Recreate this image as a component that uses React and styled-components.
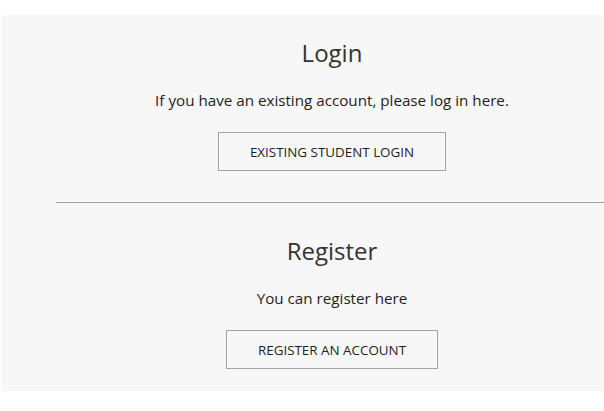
import React from "react";
import styled, { createGlobalStyle } from "styled-components";

const Global = createGlobalStyle`
  html, body { margin: 0; padding: 0; background: #ffffff; overflow: hidden; }
  body { font-family: "Open Sans", "Noto Sans", sans-serif; color: #222; }
`;

const Page = styled.div`
  width: 604px;
  height: 411px;
  overflow: hidden;
  padding-top: 15px;
  box-sizing: border-box;
`;

const Panel = styled.div`
  margin-left: 2px;
  width: 660px;
  background: #f7f7f7;
  padding: 0 54px 22px;
  box-sizing: border-box;
  display: flex;
  flex-direction: column;
`;

const Section = styled.section`
  display: flex;
  flex-direction: column;
  align-items: center;
  padding-top: ${(p) => p.$top}px;
`;

const Title = styled.h2`
  margin: 0;
  font-weight: 400;
  font-size: 24px;
  line-height: 32px;
  color: #333;
`;

const Text = styled.p`
  margin: 21px 0 0;
  font-size: 15.2px;
  line-height: 20px;
  color: #1e1e1e;
`;

const Button = styled.a`
  margin-top: 22px;
  display: flex;
  align-items: center;
  justify-content: center;
  height: 39px;
  box-sizing: border-box;
  padding: 0 31px;
  border: 1px solid #a3a3a3;
  font-size: 13.4px;
  color: #1e1e1e;
  text-decoration: none;
  text-transform: uppercase;
`;

const Divider = styled.hr`
  margin: 31px 0 0;
  border: 0;
  border-top: 1px solid #a0a0a0;
  height: 0;
`;

export default function App() {
  return (
    <Page>
      <Global />
      <Panel>
        <Section $top={22}>
          <Title>Login</Title>
          <Text>If you have an existing account, please log in here.</Text>
          <Button href="#">Existing Student Login</Button>
        </Section>
        <Divider />
        <Section $top={32}>
          <Title>Register</Title>
          <Text>You can register here</Text>
          <Button href="#">Register an Account</Button>
        </Section>
      </Panel>
    </Page>
  );
}
